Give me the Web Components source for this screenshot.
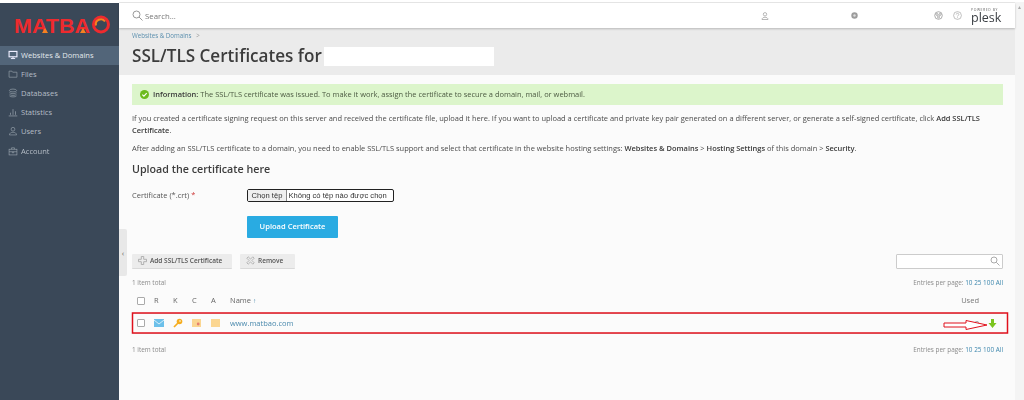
<!DOCTYPE html>
<html><head><meta charset="utf-8"><style>
html,body{margin:0;padding:0;height:400px;overflow:hidden;background:#fff}
body{font-family:"Open Sans",sans-serif;font-size:7.47px;color:#444}
</style></head><body>
<app-shell>
  <side-bar slot="side">
    <nav-item active icon="monitor">Websites &amp; Domains</nav-item>
    <nav-item icon="folder">Files</nav-item>
    <nav-item icon="db">Databases</nav-item>
    <nav-item icon="stats">Statistics</nav-item>
    <nav-item icon="user">Users</nav-item>
    <nav-item icon="case">Account</nav-item>
  </side-bar>
  <top-bar slot="top"></top-bar>
  <title-band slot="band"></title-band>
  <main-content slot="main"></main-content>
</app-shell>
<script>
const def=(n,html)=>customElements.define(n,class extends HTMLElement{constructor(){super();this.attachShadow({mode:'open'}).innerHTML=typeof html==='function'?html(this):html;}});
const icons={
monitor:'<rect x="1.500" y="2" width="11" height="7.500" fill="none" stroke="currentColor" stroke-width="1.600"/><path d="M4 12h6M7 9.500V12" stroke="currentColor" stroke-width="1.400"/>',
folder:'<path d="M1.500 3h4l1 1.500h6v7h-11z" fill="none" stroke="currentColor" stroke-width=".9"/>',
db:'<ellipse cx="7" cy="3.500" rx="5" ry="2" fill="none" stroke="currentColor" stroke-width=".9"/><path d="M2 6c1 2.600 9 2.600 10 0M2 8.500c1 2.600 9 2.600 10 0M2 11c1 2 9 2 10 0" fill="none" stroke="currentColor" stroke-width=".9"/>',
stats:'<path d="M1 12.500h12M3.500 11V8M7 11V3M10.500 11V6" stroke="currentColor" stroke-width="1"/>',
user:'<circle cx="7" cy="4.500" r="2.600" fill="none" stroke="currentColor" stroke-width=".9"/><path d="M2 12.500c0-5 10-5 10 0z" fill="none" stroke="currentColor" stroke-width=".9"/>',
case:'<rect x="1.500" y="4.500" width="11" height="8" fill="none" stroke="currentColor" stroke-width=".9"/><path d="M5 4.500V2.500h4v2M1.500 8h11M6 8v1.500h2V8" fill="none" stroke="currentColor" stroke-width=".9"/>'};

def('app-shell',`<style>:host{display:grid;grid-template-columns:119px 896px 9px;grid-template-rows:25px 47px 325px;width:1024px;height:397px;margin-top:3px;position:relative;background:#fbfbfb;filter:blur(.3px)}
::slotted([slot=side]){grid-row:1/4}.sb{grid-column:3;grid-row:1/4;background:#f4f4f4;color:#aaa;font-size:5px;text-align:center;padding-top:2px;margin-top:-1px}
</style><slot name="side"></slot><slot name="top"></slot><div class="sb">&#9650;</div><slot name="band"></slot><slot name="main"></slot>`);

def('side-bar',`<style>:host{display:block;background:#3a4858;height:397px}
.logo{height:42.500px;display:flex;align-items:flex-start;padding:10px 0 0 10px;box-sizing:border-box}
nav{display:flex;flex-direction:column}</style>
<div class="logo"><svg width="100" height="24" viewBox="0 0 100 24"><text x="4" y="20" font-family="Liberation Sans" font-weight="700" font-size="21" fill="#ee2a2e" textLength="76" lengthAdjust="spacingAndGlyphs">MATBA</text><circle cx="91" cy="11.500" r="7.500" fill="none" stroke="#ee2a2e" stroke-width="3"/><path d="M86 12.500a5 5 0 0 1 9-4" fill="none" stroke="#f58220" stroke-width="2"/><path d="M32 20l3-5 3 5zM70 20l3-5 3 5z" fill="#f58220"/></svg></div>
<nav><slot></slot></nav>`);

def('nav-item',el=>`<style>:host{display:flex;align-items:center;height:19.100px;padding-left:8px;gap:3px;font-size:7.550px;color:${el.hasAttribute('active')?'#e3e9ee':'#b5bdc6'};background:${el.hasAttribute('active')?'#526579':'transparent'}}
svg{width:10px;height:10px;flex:none;color:${el.hasAttribute('active')?'#eef':'#9aa4ae'}}</style><svg viewBox="0 0 14 14">${icons[el.getAttribute('icon')]}</svg><slot></slot>`);

def('top-bar',`<style>:host{display:flex;align-items:center;background:#fff;box-shadow:0 1px 2px rgba(0,0,0,.22),0 -1px 0 #e8e8e8;position:relative;z-index:1;color:#888;height:25px}
.s{display:flex;align-items:center;gap:2px;margin-left:13px;font-size:7.800px;color:#777;width:629px;flex:none}
svg{display:block}.g{fill:none;stroke:#999;stroke-width:1}
.u{width:90px;flex:none}.c{width:83px;flex:none}.i{width:19px;flex:none}
.p{margin-left:9px;width:32px;height:19px;flex:none;display:flex;flex-direction:column;margin-top:3px}.p small{display:block;font-size:3.400px;line-height:4px;letter-spacing:.6px;color:#666;white-space:nowrap}.p b{display:block;font:400 12.500px/14px "Open Sans",sans-serif;color:#3b3f44;margin-top:-1px}
</style>
<div class="s"><svg width="11" height="11" viewBox="0 0 11 11" class="g"><circle cx="4.500" cy="4.500" r="3.500"/><path d="M7 7l3.500 3.500"/></svg>Search...</div>
<div class="u"><svg width="8" height="8" viewBox="0 0 8 8" class="g" style="stroke-width:.7"><circle cx="4" cy="2.300" r="1.700"/><path d="M1 7.500c0-3 6-3 6 0z"/></svg></div>
<div class="c"><svg width="7" height="7" viewBox="0 0 7 7"><circle cx="3.500" cy="3.500" r="3.200" fill="#9c9c9c"/><circle cx="3.500" cy="3.500" r="1.200" fill="#ddd"/></svg></div>
<div class="i"><svg width="9" height="9" viewBox="0 0 9 9" class="g" style="stroke-width:.8"><circle cx="4.500" cy="4.500" r="3.800"/><circle cx="3" cy="3.500" r="1"/><circle cx="6" cy="3.500" r="1"/><circle cx="4.500" cy="6" r="1"/></svg></div>
<svg width="9" height="9" viewBox="0 0 9 9" class="g" style="stroke-width:.6;flex:none"><circle cx="4.500" cy="4.500" r="3.900"/><path d="M3.200 3.500c0-1.600 2.600-1.600 2.600 0 0 1-1.300 1-1.300 2M4.500 6.300v.8"/></svg>
<div class="p"><small>POWERED BY</small><b>plesk</b></div>`);

def('title-band',`<style>:host{display:block;background:#ebebeb;padding:4px 13px 0;height:47px;box-sizing:border-box}
.b{font-size:6.200px;color:#5b8fae;height:12px;line-height:8px}.b i{font-style:normal;color:#999;margin-left:3px}
h1{margin:0;font:600 17.100px/24px "Open Sans",sans-serif;color:#3c3c3c;display:flex;align-items:center}
.m{display:inline-block;background:#fff;width:170px;height:19px;margin-left:2px}</style>
<div class="b">Websites &amp; Domains <i>&gt;</i></div><h1>SSL/TLS Certificates for<span class="m"></span></h1>`);

def('info-alert',`<style>:host{display:flex;align-items:center;gap:4px;height:21px;background:#dcf5cb;padding-left:8px;color:#4c5a42;font-size:7.470px}
svg{flex:none}::slotted(b){font-weight:600;color:#47543d}</style>
<svg width="9" height="9" viewBox="0 0 9 9"><circle cx="4.500" cy="4.500" r="4.500" fill="#6dbb1e"/><path d="M2.300 4.600l1.600 1.600 2.800-3" fill="none" stroke="#fff" stroke-width="1.100"/></svg><span><slot></slot></span>`);

def('file-row',`<style>:host{display:grid;grid-template-columns:115px auto;align-items:center;height:14px}
.l{color:#555}.l i{color:#c33;font-style:normal}
.f{box-sizing:border-box;height:13px;width:147px;border:1px solid #222;border-radius:2px;display:flex;align-items:stretch;font:7.600px "Liberation Sans",sans-serif;color:#333;background:#fff}
.b{background:#efefef;border-right:1px solid #888;width:38px;flex:none;display:flex;align-items:center;justify-content:center;white-space:nowrap}.t{padding-left:1.500px;display:flex;align-items:center;white-space:nowrap}</style>
<div class="l">Certificate (*.crt) <i>*</i></div><div class="f"><div class="b">Chọn tệp</div><div class="t">Không có tệp nào được chọn</div></div>`);

def('btn-tool',el=>`<style>:host{display:inline-flex;align-items:center;gap:3px;height:15px;box-sizing:border-box;padding:0 0 0 6px;background:#ececec;border-bottom:1px solid #d9d9d9;border-radius:1px;font-size:6.500px;font-weight:600;color:#555}
svg{fill:none;stroke:#aaa;stroke-width:.9}</style><svg width="9" height="9" viewBox="0 0 9 9">${el.getAttribute('icon')==='x'?'<path d="M.8 2.200L2.200.8 4.500 3.100 6.800.8 8.200 2.200 5.900 4.500 8.200 6.800 6.800 8.200 4.500 5.900 2.200 8.200.8 6.800 3.100 4.500z" stroke-width=".8"/>':'<path d="M3.300.5h2.400v2.800h2.800v2.400H5.700v2.800H3.300V5.700H.5V3.300h2.800z"/>'}</svg><slot></slot>`);

def('search-box',`<style>:host{display:flex;align-items:center;justify-content:flex-end;box-sizing:border-box;width:107px;height:15px;border:1px solid #ccc;border-radius:1px;background:#fff;padding-right:2px}</style><svg width="10" height="10" viewBox="0 0 10 10" fill="none" stroke="#aaa"><circle cx="4" cy="4" r="3"/><path d="M6.300 6.300L9.500 9.500"/></svg>`);

def('list-meta',`<style>:host{display:flex;justify-content:space-between;font-size:6.400px;color:#8a8a8a;height:12px;align-items:center}a{color:#3d87ad}</style><span>1 item total</span><span>Entries per page: <a>10 25 100 All</a></span>`);

def('cert-table',`<style>:host{display:block;font-size:7.500px;color:#666}
.r{display:grid;grid-template-columns:17px 19px 19px 19px 19px auto 1fr auto;align-items:center;padding-left:5px;padding-right:24px}
.h{height:24px}.d{height:21px;box-sizing:border-box;border-top:1px solid #e2e2e2;border-bottom:1px solid #e2e2e2;background:#fbfbfb}
.cb{box-sizing:border-box;width:8px;height:8px;border:1px solid #aaa;border-radius:1px;background:#fff}
a{color:#4a89ad}.ar{color:#4a89ad;font-size:6.500px}
.u{grid-column:8;color:#777}
</style>
<div class="r h"><span class="cb"></span><span>R</span><span>K</span><span>C</span><span>A</span><span>Name <span class="ar">&#8593;</span></span><span></span><span class="u">Used</span></div>
<div class="r d"><span class="cb"></span>
<svg width="10" height="8" viewBox="0 0 10 8"><rect width="10" height="8" fill="#6cc0ea"/><path d="M0 1l5 4 5-4" fill="none" stroke="#e4f4fb" stroke-width=".9"/></svg>
<svg width="10" height="10" viewBox="0 0 10 10"><circle cx="6.500" cy="3.500" r="2.800" fill="#f5ad1f"/><circle cx="7" cy="3" r=".8" fill="#fff"/><path d="M5 5L1 9" stroke="#f5ad1f" stroke-width="1.700"/></svg>
<svg width="9" height="8" viewBox="0 0 9 8"><rect width="9" height="8" fill="#fbd691"/><circle cx="6.200" cy="5" r="1.400" fill="#e77f6f"/></svg>
<svg width="9" height="8" viewBox="0 0 9 8"><rect width="9" height="8" fill="#fbd691"/></svg>
<a>www.matbao.com</a><span></span><span style="color:#888;justify-self:end">0</span></div>`);

def('main-content',`<style>:host{display:block;position:relative;padding:9px 12px 0 13px;height:325px;box-sizing:border-box;line-height:11.250px;color:#4b4b4b}
p{margin:0 0 7.500px}b{font-weight:600;color:#3a3a3a}
.a{margin-bottom:8.400px}
h2{margin:7.500px 0 0;font:600 10.700px/15px "Open Sans",sans-serif;color:#3d3d3d}
.form{margin-top:11.500px}.up{margin:13px 0 0 115px;width:91px;height:22px;background:#29abe2;color:#fff;display:flex;align-items:center;justify-content:center;font-weight:600;font-size:7.550px;border-radius:1px}
.tools{display:flex;align-items:center;margin-top:16px}.sp{flex:1}
.hdl{position:absolute;left:0;top:154px;width:8px;height:47px;background:#e8e8e8;color:#666;font-size:8px;display:flex;align-items:center;justify-content:center;border-radius:0 2px 2px 0}
.m1{margin-top:8px}.m2{margin-top:10px}
svg.o{position:absolute;left:0;top:0;pointer-events:none}
</style>
<div class="hdl">&#8249;</div>
<info-alert class="a"><b>Information:</b> The SSL/TLS certificate was issued. To make it work, assign the certificate to secure a domain, mail, or webmail.</info-alert>
<p>If you created a certificate signing request on this server and received the certificate file, upload it here. If you want to upload a certificate and private key pair generated on a different server, or generate a self-signed certificate, click <b>Add SSL/TLS Certificate</b>.</p>
<p>After adding an SSL/TLS certificate to a domain, you need to enable SSL/TLS support and select that certificate in the website hosting settings: <b>Websites &amp; Domains</b> &gt; <b>Hosting Settings</b> of this domain &gt; <b>Security</b>.</p>
<h2>Upload the certificate here</h2>
<file-row class="form"></file-row>
<div class="up">Upload Certificate</div>
<div class="tools"><btn-tool icon="plus" style="width:100px;margin-right:8px">Add SSL/TLS Certificate</btn-tool><btn-tool icon="x" style="width:55px">Remove</btn-tool><span class="sp"></span><search-box></search-box></div>
<list-meta class="m1"></list-meta>
<cert-table></cert-table>
<list-meta class="m2"></list-meta>
<svg class="o" width="895" height="325" viewBox="0 0 895 325">
<rect x="13.500" y="238" width="875" height="20" fill="none" stroke="#e0101c" stroke-width="1.500"/>
<path d="M825 248h22v-2.500l21 4.500-21 4.500v-2.500h-22z" fill="#fff" stroke="#e0101c" stroke-width="1"/>
<path d="M872 244h3v4h2.500l-4 5-4-5h2.500z" fill="#7cc520"/>
</svg>`);
</script>
</body></html>
